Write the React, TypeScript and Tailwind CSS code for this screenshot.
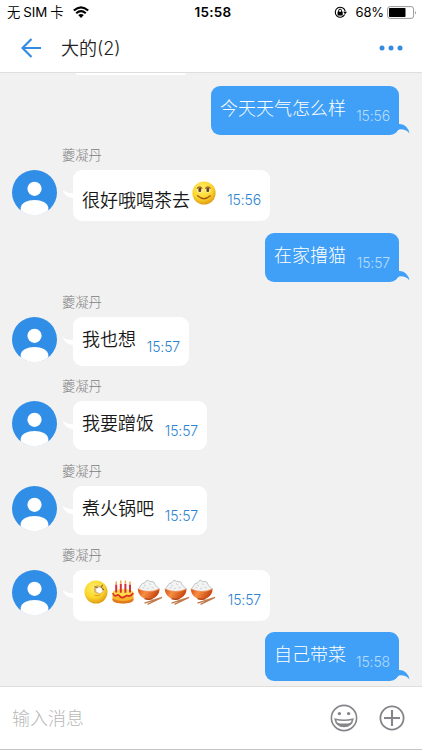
import React from 'react';

type Emoji = 'smile' | 'shy' | 'cake' | 'rice';

type Message = {
  outgoing?: boolean;
  text?: string;
  emojis?: Emoji[];
  time: string;
  row: string;
  bubble: string;
  textClass?: string;
};

const messages: Message[] = [
  { outgoing: true, text: '今天天气怎么样', time: '15:56', row: 'mt-[13px]', bubble: 'w-[188px] h-[49px]' },
  { text: '很好哦喝茶去', emojis: ['smile'], time: '15:56', row: 'h-[86px]', bubble: 'w-[197px] h-[51px]', textClass: 'pt-[8px]' },
  { outgoing: true, text: '在家撸猫', time: '15:57', row: 'mt-3', bubble: 'w-[134px] h-[49px]' },
  { text: '我也想', time: '15:57', row: 'h-[84px]', bubble: 'w-[116px] h-[49px]' },
  { text: '我要蹭饭', time: '15:57', row: 'h-[85px]', bubble: 'w-[134px] h-[49px]' },
  { text: '煮火锅吧', time: '15:57', row: 'h-[84px]', bubble: 'w-[134px] h-[49px]' },
  { emojis: ['shy', 'cake', 'rice', 'rice', 'rice'], time: '15:57', row: 'h-[86px]', bubble: 'w-[197px] h-[51px]' },
  { outgoing: true, text: '自己带菜', time: '15:58', row: 'mt-[11px]', bubble: 'w-[134px] h-[49px]' },
];

function Gradients() {
  return (
    <svg className="absolute h-0 w-0" aria-hidden="true">
      <defs>
        <radialGradient id="face" cx="42%" cy="32%" r="72%">
          <stop offset="0" stopColor="#ffee66" />
          <stop offset="0.6" stopColor="#fbd62c" />
          <stop offset="1" stopColor="#dd9210" />
        </radialGradient>
        <linearGradient id="bowl" x1="0" x2="1" y1="0" y2="0.3">
          <stop offset="0" stopColor="#cf4b14" />
          <stop offset="0.4" stopColor="#f88f42" />
          <stop offset="1" stopColor="#c4430d" />
        </linearGradient>
      </defs>
    </svg>
  );
}

function EmojiIcon({ kind }: { kind: Emoji }) {
  if (kind === 'smile') {
    return (
      <svg viewBox="0 0 24 24" className="h-6 w-6">
        <circle cx="12" cy="12" r="11.6" fill="url(#face)" />
        <rect x="5.2" y="6" width="5" height="5.4" rx="1.6" fill="#fff6c8" />
        <rect x="13.4" y="6" width="5" height="5.4" rx="1.6" fill="#fff6c8" />
        <path d="M5 7.6Q7.6 4 10.3 7.6M13.2 7.6Q15.9 4 18.6 7.6" stroke="#a0641c" strokeWidth="1.2" fill="none" />
        <rect x="6.4" y="6.8" width="2.8" height="4.2" rx="1" fill="#6b4218" />
        <rect x="14.4" y="6.8" width="2.8" height="4.2" rx="1" fill="#6b4218" />
        <path d="M5.6 14.8Q12 20.6 18.2 14.8" stroke="#a85a12" strokeWidth="1.3" fill="none" strokeLinecap="round" />
      </svg>
    );
  }
  if (kind === 'shy') {
    return (
      <svg viewBox="0 0 24 24" className="h-6 w-6">
        <circle cx="12" cy="12" r="11.5" fill="url(#face)" />
        <path d="M10 8l3-3 4 1 3 3-1 4-5 1-4-2z" fill="#d9b66b" />
        <path d="M12 8.8l3-1.6 3 1.4.6 3.4-3 1.2-3.2-1.4z" fill="#fff" />
        <path d="M10.5 6.4l3.2 1.4M18.6 4.8l-1.4 3M18 8.5l2 1.2" stroke="#8a672c" strokeWidth="1.1" fill="none" />
        <path d="M10.5 15q3 1.6 6-.4" stroke="#e0a024" strokeWidth="1.1" fill="none" />
      </svg>
    );
  }
  if (kind === 'cake') {
    return (
      <svg viewBox="0 0 24 24" className="h-6 w-6">
        <path d="M1.5 13v6.5c1 5 20 5 21 0V13z" fill="#f5b42a" />
        <path d="M1.5 18.5v1.5c1 4.8 20 4.8 21 0v-1.5q-10.5 5-21 0z" fill="#e2791d" />
        <ellipse cx="12" cy="12.5" rx="10.5" ry="3.6" fill="#ffdc4e" />
        <path d="M1.8 13q1.5 4 3.6 2.4t4 1.6q2.4 1.4 4.4-.4t4-.4q3-.6 4.4-3.2" stroke="#da2f22" strokeWidth="1.6" fill="none" />
        <path d="M5.2 4.5v8M9.8 3.8v9M14.4 3.8v9M19 4.5v8" stroke="#d8303a" strokeWidth="2" />
        <path d="M5.2 1.4v3M9.8.6v3M14.4.6v3M19 1.4v3" stroke="#eda53a" strokeWidth="1.4" />
      </svg>
    );
  }
  return (
    <svg viewBox="0 0 27 27" className="-mt-px h-[27px] w-[27px]">
      <path d="M7.5 24.2l16-5.4M10.5 25.4l14.5-7" stroke="#c07a4c" strokeWidth="1.3" />
      <path d="M1.4 10l3.6-5.4L8 3.6 10 1l2.6 1.4 4 .4L18.4 6l3.8 4-2.8 4H4.2z" fill="#f2f3f3" stroke="#b3b7b9" strokeWidth="0.8" />
      <path d="M7 6l2 .8M12 4.6l2 1.2M5.4 9l2-.6M14.4 8l2.4 1M10 9.8l2-.8" stroke="#c5c9cb" strokeWidth="0.8" />
      <path d="M.8 10q10.9 5 21.8 0-.4 6.4-5.4 9-5.5 2.6-11 0Q1.2 16.4.8 10" fill="url(#bowl)" />
      <path d="M.8 10q10.9 5 21.8 0" stroke="#ee8a4e" strokeWidth="0.9" fill="none" />
      <path d="M7.6 19.6q4 1.5 8 0" stroke="#ad3e10" strokeWidth="1.3" fill="none" />
    </svg>
  );
}

function Avatar() {
  return (
    <svg viewBox="0 0 45 45" className="ml-[11.5px] h-[45px] w-[45px] shrink-0">
      <circle cx="22.5" cy="22.5" r="22.5" fill="#318ee7" />
      <circle cx="22.5" cy="18.8" r="7.1" fill="#fff" />
      <path d="M8.7 40.2v-2.8c1.2-4.5 6.4-7.4 13.8-7.4s12.6 2.9 13.8 7.4v2.8A22.5 22.5 0 0 1 8.7 40.2Z" fill="#fff" />
      <path d="M8.7 40.2Q14.8 45 22.5 45t13.8-4.8Z" fill="#fff" />
    </svg>
  );
}

function ChatMessage({ message: m }: { message: Message }) {
  if (m.outgoing) {
    return (
      <div className={`flex shrink-0 justify-end pr-[23px] ${m.row}`}>
        <div className={`relative flex rounded-[9px] bg-[#40a0f7] pl-[9px] ${m.bubble}`}>
          <span className="pt-[8px] text-[18px] leading-[26px] font-light whitespace-nowrap text-white">{m.text}</span>
          <time className="absolute right-[9px] bottom-[9px] text-[14px] leading-5 tracking-[-0.15px] font-[Inter] font-light text-[#b6dcff]">{m.time}</time>
          <svg viewBox="0 0 14 12" className="absolute right-[-11px] bottom-0 h-3 w-3.5">
            <path d="M0 1H4Q11.5 1.6 13.5 10.4 9.5 5.6 3 6.4L0 9Z" fill="#40a0f7" />
          </svg>
        </div>
      </div>
    );
  }
  return (
    <div className={`shrink-0 ${m.row}`}>
      <div className="h-[35px] pt-[10px] pl-[62px] text-[13.3px] leading-5 font-light text-[#808080]">夔凝丹</div>
      <div className="flex">
        <Avatar />
        <div className={`relative ml-[16.5px] flex rounded-[9px] bg-white pl-[9px] ${m.bubble}`}>
          <svg viewBox="0 0 12 10" className="absolute top-[19px] left-[-11px] h-2.5 w-3">
            <path d="M.4.6Q3.5 4.4 12 4.2V9Q3 9 .4.6Z" fill="#fff" />
          </svg>
          {m.text && <span className={`${m.textClass ?? ''} mt-[8px] text-[18px] leading-[26px] font-[350] whitespace-nowrap text-[#181818]`}>{m.text}</span>}
          {m.emojis && (
            <span className={`flex h-[27px] ${m.text ? 'mt-[11px] ml-[2px]' : 'mt-[10px] ml-[2px] gap-[2.6px]'}`}>
              {m.emojis.map((kind, index) => (
                <span key={index} className="w-6 shrink-0">
                  <EmojiIcon kind={kind} />
                </span>
              ))}
            </span>
          )}
          <time className={`absolute right-[9px] ${m.emojis ? 'bottom-[11px]' : 'bottom-[9px]'} text-[14px] leading-5 tracking-[-0.15px] font-[Inter] font-light text-[#2c82d0]`}>{m.time}</time>
        </div>
      </div>
    </div>
  );
}

function StatusBar() {
  return (
    <div className="grid h-6 grid-cols-3 items-center pr-[5px] pl-[7px] text-[13.3px] text-black">
      <div className="flex items-center font-[350] whitespace-nowrap">
        <span>无 <span className="font-[Inter] font-normal">SIM</span> 卡</span>
        <svg viewBox="0 0 16 12" className="ml-[9px] h-3 w-4">
          <path d="M.8 4.6Q8-2 15.2 4.6M3.2 7.2Q8 3 12.8 7.2" stroke="#000" strokeWidth="2.1" fill="none" />
          <path d="M5.2 9.1Q8 6.8 10.8 9.1L8 11.9Z" />
        </svg>
      </div>
      <span className="pl-[2px] text-center font-[Inter] text-[13.5px] font-semibold tracking-[0.3px]">15:58</span>
      <div className="flex items-center justify-end font-[Inter]">
        <svg viewBox="0 0 13 13" className="mr-[8px] h-[13px] w-[13px]">
          <path d="M10.7 8.6A5 5 0 1 1 11.2 5.3" fill="none" stroke="#000" strokeWidth="1.1" />
          <path d="M9.2 5.8h3.8l-1.9 2.5Z" />
          <path d="M3.5 5.7h5.2v3.8H3.5Z" />
          <path d="M4.6 6V4.7a1.5 1.5 0 0 1 3 0V6" fill="none" stroke="#000" />
        </svg>
        <span className="pt-px text-[13px] tracking-[-0.1px]">68%</span>
        <svg viewBox="0 0 30 13" className="ml-[3px] h-[13px] w-[30px]">
          <rect x=".6" y=".6" width="26" height="11.8" rx="2.5" fill="#fff" stroke="#999" />
          <rect x="2" y="2" width="16.5" height="9" rx=".8" />
          <path d="M28 4.5q1.7 2 0 4Z" fill="#999" />
        </svg>
      </div>
    </div>
  );
}

export default function App() {
  return (
    <main className="flex h-[750px] w-[422px] flex-col overflow-hidden bg-[#f1f1f1] font-['Noto_Sans_CJK_SC',sans-serif]">
      <Gradients />
      <header className="h-[73px] shrink-0 border-b border-[#dedede] bg-white">
        <StatusBar />
        <div className="flex h-12 items-center pr-[19px] pl-[21px]">
          <svg viewBox="0 0 20 20" className="h-5 w-5">
            <path d="M10.5 1 1.5 10l9 9M2 10h18" fill="none" stroke="#348be0" strokeWidth="2.2" />
          </svg>
          <h1 className="ml-5 text-[18px] leading-6 font-[350] text-[#222]">大的<span className="font-[Inter] text-[18px] font-light">(2)</span></h1>
          <svg viewBox="0 0 24 6" className="ml-auto h-1.5 w-6">
            <circle cx="3" cy="3" r="2.5" fill="#348be0" />
            <circle cx="12" cy="3" r="2.5" fill="#348be0" />
            <circle cx="21" cy="3" r="2.5" fill="#348be0" />
          </svg>
        </div>
      </header>
      <section className="flex h-[613px] shrink-0 flex-col overflow-hidden">
        <div className="relative h-0">
          <div className="absolute top-0 left-[76px] h-0.5 w-[110px] rounded-b-lg bg-white" />
        </div>
        {messages.map((message, index) => (
          <ChatMessage key={index} message={message} />
        ))}
      </section>
      <footer className="flex h-16 shrink-0 items-center border-y border-t-[#dedede] border-b-[#c4c4c4] bg-white pr-[17px] pb-[2px] pl-3">
        <span className="-mt-px text-[18px] leading-6 font-light text-[#b8b8b8]">输入消息</span>
        <svg viewBox="0 0 28 28" className="mt-[2px] ml-auto h-7 w-7" fill="none" stroke="#85858a" strokeWidth="1.6">
          <circle cx="14" cy="14" r="12.6" />
          <circle cx="9.4" cy="9.6" r="1.7" fill="#85858a" stroke="none" />
          <circle cx="18.6" cy="9.6" r="1.7" fill="#85858a" stroke="none" />
          <path d="M5.2 15.2q8.8 2.2 17.6 0-1.3 7.3-8.8 7.3t-8.8-7.3Z" />
          <path d="M6.5 18.4q7.5 2.4 15 0-2.2 4.1-7.5 4.1t-7.5-4.1Z" fill="#85858a" stroke="none" />
        </svg>
        <svg viewBox="0 0 26 26" className="mt-[2px] ml-[21px] h-[26px] w-[26px]" fill="none" stroke="#85858a" strokeWidth="1.8">
          <circle cx="13" cy="13" r="11.6" />
          <path d="M13 5v16M5 13h16" strokeWidth="2.1" />
        </svg>
      </footer>
    </main>
  );
}
